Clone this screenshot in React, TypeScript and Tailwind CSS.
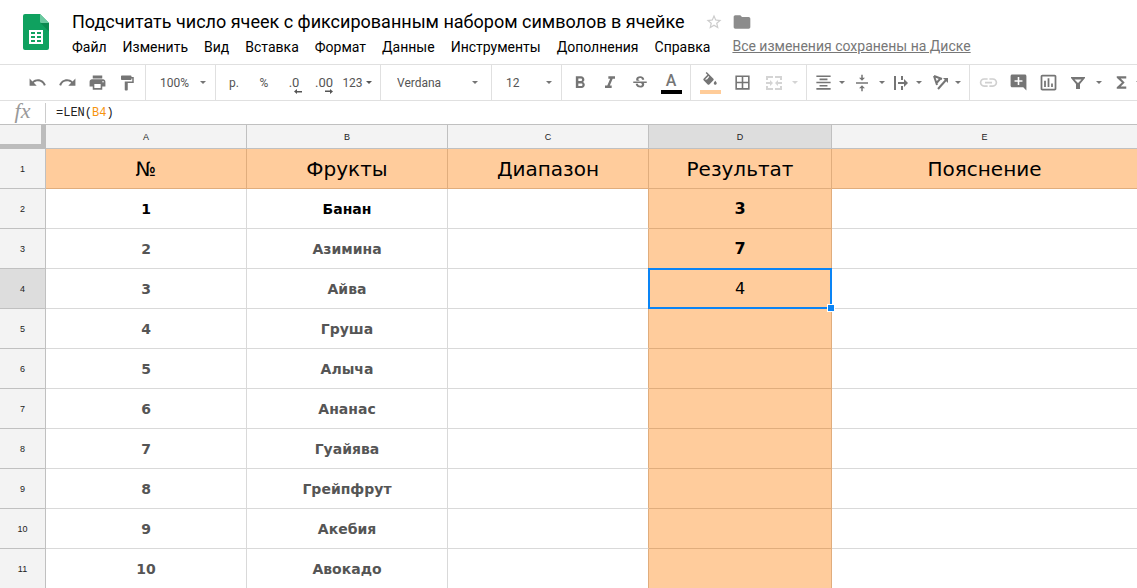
import React from "react";
import {
  MdAddComment,
  MdBorderAll,
  MdFolder,
  MdFormatAlignCenter,
  MdFormatBold,
  MdFormatItalic,
  MdFunctions,
  MdLink,
  MdOutlineInsertChart,
  MdPrint,
  MdRedo,
  MdStarBorder,
  MdStrikethroughS,
  MdUndo,
  MdVerticalAlignCenter,
} from "react-icons/md";

const menus = [
  "Файл",
  "Изменить",
  "Вид",
  "Вставка",
  "Формат",
  "Данные",
  "Инструменты",
  "Дополнения",
  "Справка",
];

const columns = ["A", "B", "C", "D", "E"];

const rows = [
  { id: 2, num: "1", fruit: "Банан", result: "3" },
  { id: 3, num: "2", fruit: "Азимина", result: "7" },
  { id: 4, num: "3", fruit: "Айва", result: "4" },
  { id: 5, num: "4", fruit: "Груша", result: "" },
  { id: 6, num: "5", fruit: "Алыча", result: "" },
  { id: 7, num: "6", fruit: "Ананас", result: "" },
  { id: 8, num: "7", fruit: "Гуайява", result: "" },
  { id: 9, num: "8", fruit: "Грейпфрут", result: "" },
  { id: 10, num: "9", fruit: "Акебия", result: "" },
  { id: 11, num: "10", fruit: "Авокадо", result: "" },
];

const ACTIVE_ROW = 4;
const ACTIVE_COLUMN = "D";

const SheetsLogo = () => (
  <svg width="26" height="36" viewBox="0 0 26 36" aria-hidden="true">
    <path
      d="M2 0h15l9 9v25a2 2 0 0 1-2 2H2a2 2 0 0 1-2-2V2a2 2 0 0 1 2-2z"
      fill="#0fa15f"
    />
    <path d="M17.5 9H26v8.5z" fill="#0b8a50" />
    <path d="M17 0l9 9h-7.500a1.500 1.500 0 0 1-1.500-1.500z" fill="#6cc9a0" />
    <path
      d="M6 16h14v14H6zM8 18v2h4v-2zm6 0v2h4v-2zm-6 4v2h4v-2zm6 0v2h4v-2zm-6 4v2h4v-2zm6 0v2h4v-2z"
      fill="#fff"
      fillRule="evenodd"
    />
  </svg>
);

const Caret = ({ className = "" }: { className?: string }) => (
  <svg
    className={`shrink-0 ${className}`}
    width="6"
    height="3"
    viewBox="0 0 6 3"
    fill="currentColor"
    aria-hidden="true"
  >
    <path d="M0 0h6L3 3z" />
  </svg>
);

const PaintIcon = () => (
  <svg width="18" height="18" viewBox="0 0 24 24" fill="currentColor">
    <path d="M18 4V3c0-.55-.45-1-1-1H5c-.55 0-1 .45-1 1v4c0 .55.45 1 1 1h12c.55 0 1-.45 1-1V6h1v4H9v11c0 .55.45 1 1 1h2c.55 0 1-.45 1-1v-9h8V4h-3z" />
  </svg>
);

const FillIcon = () => (
  <svg width="18" height="18" viewBox="0 0 24 24" fill="currentColor">
    <path d="M16.56 8.94L7.62 0 6.21 1.41l2.38 2.38-5.15 5.15c-.59.59-.59 1.54 0 2.12l5.5 5.5c.29.29.68.44 1.06.44s.77-.15 1.06-.44l5.500-5.500c.59-.58.59-1.530 0-2.120zM5.210 10L10 5.210 11 6.200l-3 3.800zM19 11.500s-2 2.170-2 3.500c0 1.100.9 2 2 2s2-.9 2-2c0-1.330-2-3.500-2-3.500z" />
  </svg>
);

const MergeIcon = () => (
  <svg width="16" height="14" viewBox="0 0 16 14" fill="currentColor">
    <path d="M0 0h7v2H2v2H0zM9 0h7v4h-2V2H9zM0 10h2v2h5v2H0zM14 10h2v4H9v-2h5z" />
    <path d="M0 6h4V4l3 3-3 3V8H0zM16 6h-4V4L9 7l3 3V8h4z" />
  </svg>
);

const WrapIcon = () => (
  <svg width="14" height="14" viewBox="0 0 14 14" fill="currentColor">
    <path d="M0 0h2v14H0zM7 0h2v4H7zM7 10h2v4H7zM4 6h6V3l4 4-4 4V8H4z" />
  </svg>
);

const RotateIcon = () => (
  <svg
    width="16"
    height="15"
    viewBox="0 0 16 15"
    fill="none"
    stroke="currentColor"
  >
    <path d="M1 1l3 9M1 1l8 3M3.500 8L7.500 3.500" strokeWidth="2" />
    <path d="M5 14L13 5" strokeWidth="2" />
    <path d="M10 3h5v5z" fill="currentColor" stroke="none" />
  </svg>
);

const FilterIcon = () => (
  <svg width="14" height="12" viewBox="0 0 14 12" fill="currentColor">
    <path
      d="M0 0h14v1L9 7v5H5V7L0 1zM3.500 2.500L7 6l3.500-3.500z"
      fillRule="evenodd"
    />
  </svg>
);

const ArrowLine = ({ flip = false }: { flip?: boolean }) => (
  <svg
    className={flip ? "rotate-180" : ""}
    width="8"
    height="5"
    viewBox="0 0 8 5"
    fill="currentColor"
  >
    <path d="M0 2.500L3 0v2h5v1.500H3V5z" />
  </svg>
);

const ToolButton = ({
  label,
  className = "w-[30px]",
  children,
}: {
  label: string;
  className?: string;
  children: React.ReactNode;
}) => (
  <button
    type="button"
    aria-label={label}
    title={label}
    className={`flex h-full shrink-0 items-center justify-center ${className}`}
  >
    {children}
  </button>
);

const Group = ({
  className = "",
  children,
}: {
  className?: string;
  children: React.ReactNode;
}) => (
  <div
    className={`flex h-full shrink-0 items-center border-r border-[#e0e0e0] ${className}`}
  >
    {children}
  </div>
);

const ToolSelect = ({
  label,
  options,
  className = "",
}: {
  label: string;
  options: string[];
  className?: string;
}) => (
  <label className={`flex h-full w-full items-center ${className}`}>
    <select
      aria-label={label}
      defaultValue={options[0]}
      className="min-w-0 flex-1 appearance-none bg-transparent text-xs text-[#555] outline-none"
    >
      {options.map((option) => (
        <option key={option}>{option}</option>
      ))}
    </select>
    <Caret />
  </label>
);

const Header = () => (
  <header className="flex h-16 shrink-0 pl-[23px]">
    <a href="#home" aria-label="Таблицы" className="w-[49px] shrink-0 pt-[14px]">
      <SheetsLogo />
    </a>
    <div className="min-w-0 pt-2">
      <div className="flex h-7 items-center whitespace-nowrap">
        <h1 className="text-lg text-black">
          Подсчитать число ячеек с фиксированным набором символов в ячейке
        </h1>
        <button type="button" aria-label="Пометить" className="ml-5 text-[#ccc]">
          <MdStarBorder size={18} />
        </button>
        <button
          type="button"
          aria-label="Переместить в папку"
          className="ml-[9px] text-[#8c8c8c]"
        >
          <MdFolder size={20} />
        </button>
      </div>
      <div className="flex items-start whitespace-nowrap text-sm">
        <nav className="flex gap-4 pt-px">
          {menus.map((menu) => (
            <button type="button" key={menu} className="text-black">
              {menu}
            </button>
          ))}
        </nav>
        <a href="#history" className="ml-[22px] text-[#777] underline">
          Все изменения сохранены на Диске
        </a>
      </div>
    </div>
  </header>
);

const Toolbar = () => (
  <div
    role="toolbar"
    className="flex h-[37px] shrink-0 overflow-hidden border-y border-[#e0e0e0] text-xs text-[#757575]"
  >
    <Group className="w-[146px] pl-[22px]">
      <ToolButton label="Отменить">
        <MdUndo size={19} />
      </ToolButton>
      <ToolButton label="Повторить">
        <MdRedo size={19} />
      </ToolButton>
      <ToolButton label="Печать">
        <MdPrint size={19} />
      </ToolButton>
      <ToolButton label="Копировать форматирование">
        <PaintIcon />
      </ToolButton>
    </Group>
    <Group className="w-[70px]">
      <ToolSelect
        label="Масштаб"
        options={["100%", "75%", "50%"]}
        className="pr-[9px] pl-[14px]"
      />
    </Group>
    <Group className="w-[165px] pl-[3px] text-[#555]">
      <ToolButton label="Денежный формат">р.</ToolButton>
      <ToolButton label="Процентный формат">%</ToolButton>
      <ToolButton label="Уменьшить число знаков">
        <span className="flex flex-col pt-[6px] text-[13px] leading-3">
          .0
          <span className="pl-2">
            <ArrowLine />
          </span>
        </span>
      </ToolButton>
      <ToolButton label="Увеличить число знаков">
        <span className="flex flex-col pt-[6px] text-[13px] leading-3">
          .00
          <span className="pl-[10px]">
            <ArrowLine flip />
          </span>
        </span>
      </ToolButton>
      <ToolButton label="Другие форматы" className="w-9 gap-[3px]">
        123
        <Caret />
      </ToolButton>
    </Group>
    <Group className="w-[111px]">
      <ToolSelect
        label="Шрифт"
        options={["Verdana", "Arial", "Roboto"]}
        className="pr-[13px] pl-4"
      />
    </Group>
    <Group className="w-[70px]">
      <ToolSelect
        label="Размер шрифта"
        options={["12", "14", "16"]}
        className="pr-[9px] pl-[14px]"
      />
    </Group>
    <Group className="w-[129px] pl-[3px]">
      <ToolButton label="Полужирный">
        <MdFormatBold size={20} />
      </ToolButton>
      <ToolButton label="Курсив">
        <MdFormatItalic size={20} />
      </ToolButton>
      <ToolButton label="Зачеркнутый">
        <MdStrikethroughS size={18} />
      </ToolButton>
      <ToolButton label="Цвет текста" className="w-8">
        <span className="flex w-[21px] flex-col items-center text-base leading-[18px] font-medium">
          A
          <span className="h-1 w-full bg-black" />
        </span>
      </ToolButton>
    </Group>
    <Group className="w-[116px] pl-1">
      <ToolButton label="Цвет заливки">
        <span className="flex w-[21px] flex-col items-center">
          <FillIcon />
          <span className="h-1 w-full bg-[#ffcc99]" />
        </span>
      </ToolButton>
      <ToolButton label="Границы" className="w-[34px]">
        <MdBorderAll size={19} />
      </ToolButton>
      <ToolButton label="Объединить ячейки" className="w-[30px] text-[#d4d4d4]">
        <MergeIcon />
      </ToolButton>
      <Caret className="ml-[3px] text-[#d4d4d4]" />
    </Group>
    <Group className="w-[163px] pl-[3px]">
      <ToolButton label="Выравнивание" className="w-[39px] gap-[6px]">
        <MdFormatAlignCenter size={19} />
        <Caret />
      </ToolButton>
      <ToolButton label="Вертикальное выравнивание" className="w-[39px] gap-2">
        <MdVerticalAlignCenter size={18} />
        <Caret />
      </ToolButton>
      <ToolButton label="Перенос текста" className="w-[39px] gap-2">
        <WrapIcon />
        <Caret />
      </ToolButton>
      <ToolButton label="Поворот текста" className="w-[39px] gap-[6px]">
        <RotateIcon />
        <Caret />
      </ToolButton>
    </Group>
    <div className="flex h-full shrink-0 items-center pl-[3px]">
      <ToolButton label="Вставить ссылку" className="w-[30px] text-[#d0d0d0]">
        <MdLink size={21} />
      </ToolButton>
      <ToolButton label="Вставить комментарий">
        <MdAddComment size={19} />
      </ToolButton>
      <ToolButton label="Вставить диаграмму">
        <MdOutlineInsertChart size={21} />
      </ToolButton>
      <ToolButton label="Создать фильтр">
        <FilterIcon />
      </ToolButton>
      <Caret className="ml-[3px]" />
      <ToolButton label="Функции" className="ml-1 w-[30px]">
        <MdFunctions size={19} />
      </ToolButton>
      <Caret />
    </div>
  </div>
);

const FormulaBar = () => (
  <div className="flex h-[23px] shrink-0 items-center">
    <div className="h-5 w-[46px] border-r border-[#ccc] text-center font-['Liberation_Serif',serif] text-[22px] leading-4 text-[#999] italic">
      fx
    </div>
    <div
      role="textbox"
      aria-label="Формула"
      contentEditable
      suppressContentEditableWarning
      className="flex-1 pl-[10px] font-['Liberation_Mono',monospace] text-xs text-[#222] outline-none"
    >
      =LEN(<span className="text-[#f7930c]">B4</span>)
    </div>
  </div>
);

const titleCell =
  "border-r border-b border-[#e0ad7d] bg-[#ffcc9c] p-0 pt-px text-xl font-normal last:border-r-0";

const RowHeader = ({ id }: { id: number }) => (
  <th
    scope="row"
    className={`border-r border-b border-[#c0c0c0] p-0 font-['Liberation_Sans',Arial,sans-serif] text-[9px] leading-3 font-normal text-[#222] ${
      id === ACTIVE_ROW ? "bg-[#ddd]" : "bg-[#f3f3f3]"
    }`}
  >
    {id}
  </th>
);

const Sheet = () => (
  <main className="min-h-0 flex-1 overflow-hidden">
    <table className="w-full table-fixed border-separate border-spacing-0 text-center font-['DejaVu_Sans',Verdana,sans-serif] text-black">
      <colgroup>
        <col className="w-[46px]" />
        <col className="w-[201px]" />
        <col className="w-[201px]" />
        <col className="w-[201px]" />
        <col className="w-[183px]" />
        <col />
      </colgroup>
      <thead>
        <tr className="h-[25px] font-['Liberation_Sans',Arial,sans-serif] text-[9px] leading-3 text-[#222]">
          <td className="border-t border-r-[5px] border-b-[5px] border-t-[#c0c0c0] border-r-[#bcbcbc] border-b-[#bcbcbc] bg-[#f3f3f3] p-0" />
          {columns.map((column) => (
            <th
              key={column}
              scope="col"
              className={`border-y border-r border-[#c0c0c0] p-0 font-normal last:border-r-0 ${
                column === ACTIVE_COLUMN ? "bg-[#ddd]" : "bg-[#f3f3f3]"
              }`}
            >
              {column}
            </th>
          ))}
        </tr>
      </thead>
      <tbody>
        <tr className="h-10">
          <RowHeader id={1} />
          <td className={titleCell}>№</td>
          <td className={titleCell}>Фрукты</td>
          <td className={titleCell}>Диапазон</td>
          <td className={titleCell}>Результат</td>
          <td className={titleCell}>Пояснение</td>
        </tr>
        {rows.map((row) => (
          <tr
            key={row.id}
            className={`h-10 text-sm font-bold ${row.id === 2 ? "text-black" : "text-[#555]"}`}
          >
            <RowHeader id={row.id} />
            <td className="border-r border-b border-[#d9d9d9] p-0">{row.num}</td>
            <td className="border-r border-b border-[#d9d9d9] p-0">
              {row.fruit}
            </td>
            <td className="border-r border-b border-r-[#e0ad7d] border-b-[#d9d9d9] p-0" />
            <td
              className={`relative border-r border-b border-[#e0ad7d] bg-[#ffcc9c] p-0 text-base text-black ${
                row.id === ACTIVE_ROW ? "z-10 font-normal" : ""
              }`}
            >
              {row.result}
              {row.id === ACTIVE_ROW && (
                <span className="absolute -inset-px border-2 border-[#0a84f5]">
                  <span className="absolute -right-[5px] -bottom-[5px] size-2 border border-white bg-[#0a84f5]" />
                </span>
              )}
            </td>
            <td className="border-b border-[#d9d9d9] p-0" />
          </tr>
        ))}
      </tbody>
    </table>
  </main>
);

const App = () => {
  return (
    <div className="flex h-screen flex-col overflow-hidden bg-white font-['Roboto',sans-serif]">
      <Header />
      <Toolbar />
      <FormulaBar />
      <Sheet />
    </div>
  );
};

export default App;
